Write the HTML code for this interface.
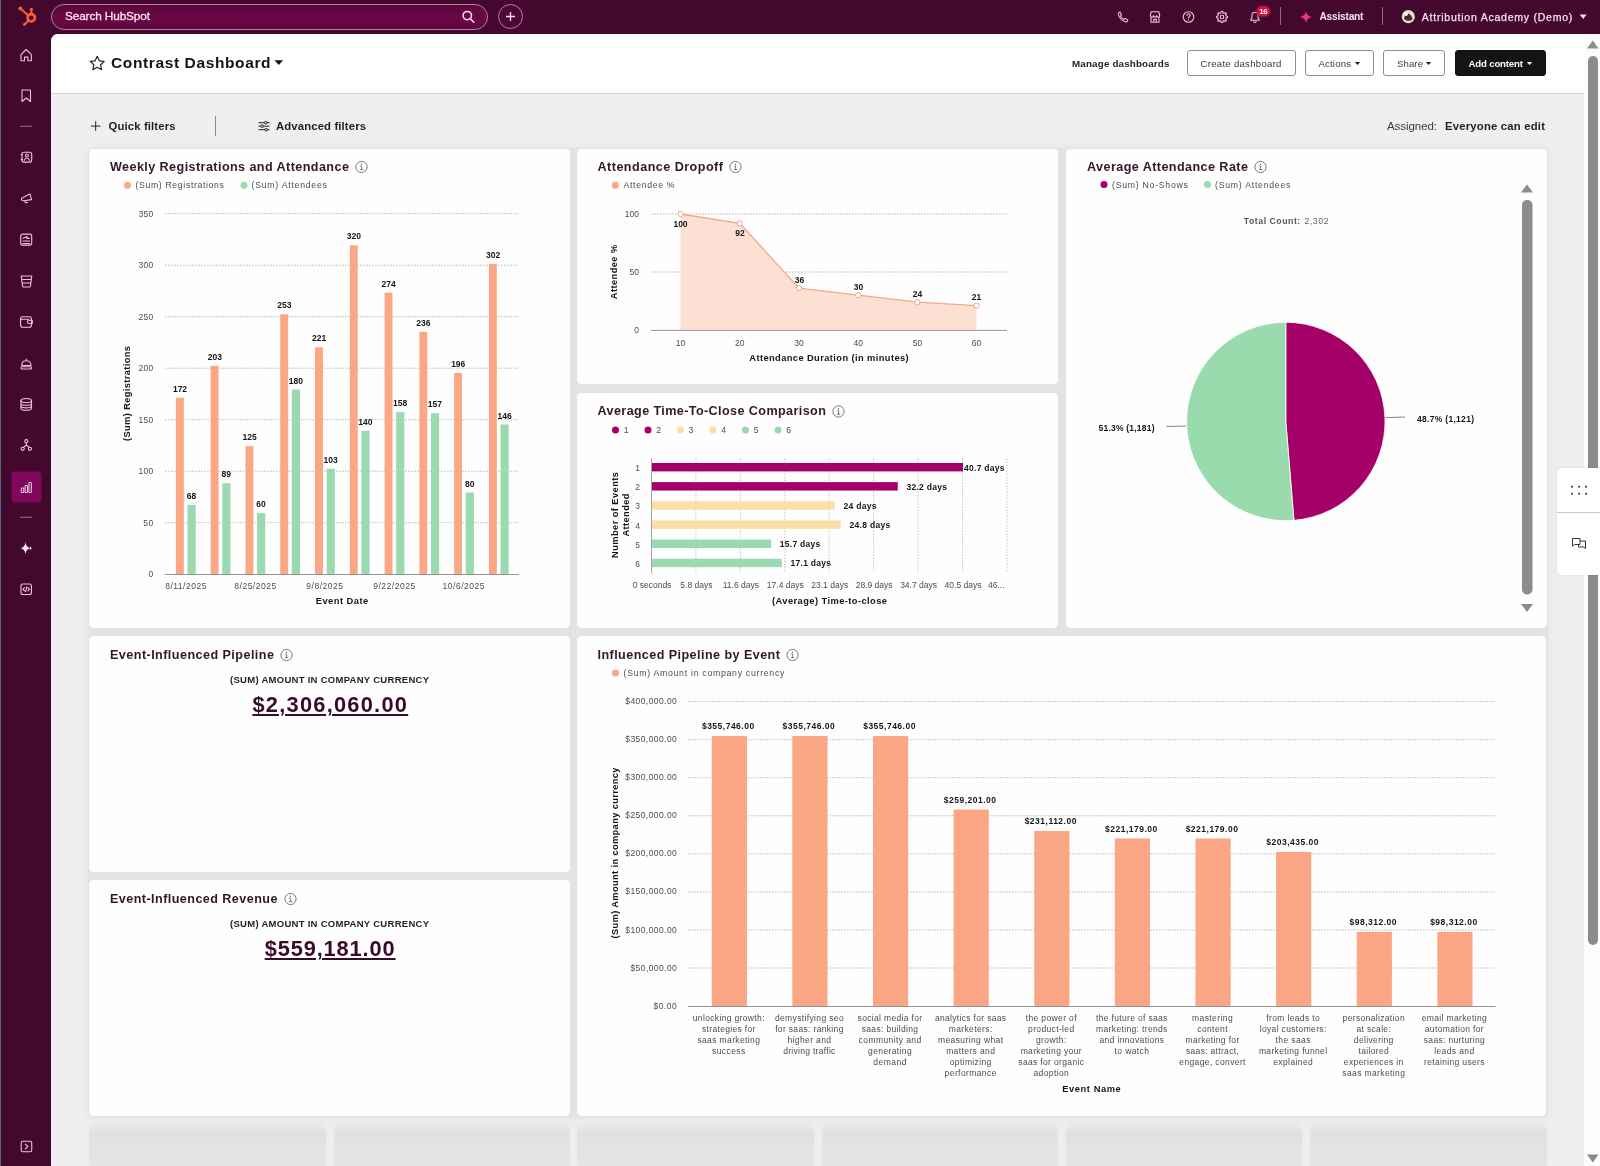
<!DOCTYPE html>
<html lang="en"><head><meta charset="utf-8"><title>Contrast Dashboard</title>
<style>
*{box-sizing:border-box;margin:0;padding:0}
html,body{width:1600px;height:1166px;overflow:hidden;background:#efefef;font-family:"Liberation Sans", Arial, sans-serif;}
body{position:relative}
#page{position:absolute;left:0;top:0;width:1600px;height:1166px;overflow:hidden;will-change:transform}
.t{position:absolute;white-space:nowrap;line-height:1;}
.abs{position:absolute}
#top{position:absolute;left:0;top:0;width:1600px;height:34px;background:#44082e}
#side{position:absolute;left:0;top:0;width:51px;height:1166px;background:#44082e}
#edge{position:absolute;left:0;top:0;width:3px;height:1166px;background:linear-gradient(90deg,#70667b 0,#6a5f75 .9px,#2e1232 1.300px,#34102f 2px,#44082e 3px)}
#main{position:absolute;left:51px;top:34px;width:1549px;height:1132px;background:#efefef;border-top-left-radius:7px;overflow:hidden}
#hdr{position:absolute;left:0;top:0;width:1549px;height:59.700px;background:#fff;border-bottom:1px solid #d4d4d4}
#search{position:absolute;left:51px;top:4px;width:437px;height:26px;border-radius:13px;border:1px solid #b97ba3;background:linear-gradient(180deg,#5a083c 0,#6a0746 55%,#5e083f 100%)}
#plus{position:absolute;left:498px;top:4px;width:25px;height:25px;border-radius:50%;border:1px solid #b97ba3;background:#4b0934}
.vdiv{position:absolute;width:1px;background:#9a6787}
.btn{position:absolute;top:50.300px;height:25.5px;border:1px solid #8e8e8e;border-radius:3px;background:#fff}
.btn.dark{background:#141414;border-color:#141414}
.card{position:absolute;background:#fefefe;border-radius:4.500px}
#backdrop{position:absolute;left:88px;top:147.500px;width:1459.500px;height:970px;border-radius:6px;background:#e3e3e3;box-shadow:0 0 8px 1px rgba(226,226,226,.75)}
.sk{position:absolute;top:1123.500px;height:60px;border-radius:5px;background:linear-gradient(180deg,#ebebeb 0,#e1e1e1 8px,#e3e3e3 24px,#e6e6e6 100%);box-shadow:0 0 5px rgba(0,0,0,.03)}
svg{position:absolute;left:0;top:0;overflow:visible}
svg text{font-family:"Liberation Sans", Arial, sans-serif;}
#sbar{position:absolute;left:1584px;top:34px;width:16px;height:1132px;background:#fcfcfc}
#float{position:absolute;left:1557px;top:468px;width:43px;height:107px;background:#fff;border-radius:5px 0 0 5px;box-shadow:0 0 3px rgba(0,0,0,.08)}
</style></head>
<body><div id="page">
<div id="top"></div><div id="side"></div><div id="edge"></div>
<div id="search"></div><div id="plus"></div>
<span class="t" style="left:65.00px;top:11.31px;font-size:11.8px;color:#fbe3f2;letter-spacing:-0.122px;-webkit-text-stroke:.3px #fbe3f2;">Search HubSpot</span>
<div class="vdiv" style="left:1280px;top:7px;height:18px"></div><div class="vdiv" style="left:1382px;top:7px;height:18px"></div>
<span class="t" style="left:1319.50px;top:11.77px;font-size:10.2px;color:#fbe3f2;font-weight:700;letter-spacing:-0.24px;">Assistant</span>
<span class="t" style="left:1421.80px;top:12.31px;font-size:10.5px;color:#fbe3f2;letter-spacing:0.768px;-webkit-text-stroke:.25px #fbe3f2;">Attribution Academy (Demo)</span>
<div class="abs" style="left:51px;top:34px;width:12px;height:12px;background:#44082e"></div><div id="main"><div id="hdr"></div></div>
<span class="t" style="left:111.00px;top:55.48px;font-size:15.5px;color:#141414;font-weight:700;letter-spacing:0.618px;">Contrast Dashboard</span>
<span class="t" style="left:1072.00px;top:58.90px;font-size:9.8px;color:#1f1f1f;font-weight:700;letter-spacing:0.171px;">Manage dashboards</span>
<div class="btn" style="left:1187px;width:108.500px"></div>
<div class="btn" style="left:1305px;width:68.500px"></div>
<div class="btn" style="left:1383px;width:62px"></div>
<div class="btn dark" style="left:1454.500px;width:91.500px"></div>
<span class="t" style="left:1200.50px;top:59.07px;font-size:9.6px;color:#3a3a3a;letter-spacing:0.276px;">Create dashboard</span>
<span class="t" style="left:1318.50px;top:59.07px;font-size:9.6px;color:#3a3a3a;letter-spacing:0.17px;">Actions</span>
<span class="t" style="left:1397.00px;top:59.07px;font-size:9.6px;color:#3a3a3a;letter-spacing:0.095px;">Share</span>
<span class="t" style="left:1468.50px;top:59.07px;font-size:9.6px;color:#fff;font-weight:700;letter-spacing:-0.149px;">Add content</span>
<span class="t" style="left:108.50px;top:120.93px;font-size:11.3px;color:#1f1f1f;font-weight:700;letter-spacing:0.141px;">Quick filters</span>
<div class="abs" style="left:215px;top:115.500px;width:1px;height:20px;background:#8f8f8f"></div>
<span class="t" style="left:276.00px;top:120.93px;font-size:11.3px;color:#1f1f1f;font-weight:700;letter-spacing:0.139px;">Advanced filters</span>
<span class="t" style="left:1387.00px;top:120.57px;font-size:11.5px;color:#3c3c3c;letter-spacing:-0.063px;">Assigned:</span>
<span class="t" style="left:1445.00px;top:120.93px;font-size:11.3px;color:#1f1f1f;font-weight:700;letter-spacing:0.205px;">Everyone can edit</span>
<div id="backdrop"></div>
<div class="card" style="left:89.2px;top:148.7px;width:480.8px;height:479.8px"></div>
<div class="card" style="left:577.2px;top:148.7px;width:480.8px;height:235.6px"></div>
<div class="card" style="left:577.2px;top:392.7px;width:480.8px;height:235.8px"></div>
<div class="card" style="left:1066px;top:148.7px;width:480.5px;height:479.8px"></div>
<div class="card" style="left:89.2px;top:636.4px;width:480.8px;height:236px"></div>
<div class="card" style="left:89.2px;top:880.4px;width:480.8px;height:236px"></div>
<div class="card" style="left:577.2px;top:636.4px;width:969.3px;height:480px"></div>
<div class="sk" style="left:89px;width:237px"></div>
<div class="sk" style="left:333.5px;width:236.5px"></div>
<div class="sk" style="left:577px;width:237px"></div>
<div class="sk" style="left:821.5px;width:236.5px"></div>
<div class="sk" style="left:1066px;width:236px"></div>
<div class="sk" style="left:1309.5px;width:237.0px"></div>
<span class="t" style="left:110.00px;top:160.73px;font-size:12.6px;color:#33172b;font-weight:700;letter-spacing:0.419px;">Weekly Registrations and Attendance</span>
<span class="t" style="left:597.50px;top:160.73px;font-size:12.6px;color:#33172b;font-weight:700;letter-spacing:0.465px;">Attendance Dropoff</span>
<span class="t" style="left:597.50px;top:405.23px;font-size:12.6px;color:#33172b;font-weight:700;letter-spacing:0.399px;">Average Time-To-Close Comparison</span>
<span class="t" style="left:1087.00px;top:160.73px;font-size:12.6px;color:#33172b;font-weight:700;letter-spacing:0.422px;">Average Attendance Rate</span>
<span class="t" style="left:110.00px;top:648.73px;font-size:12.6px;color:#33172b;font-weight:700;letter-spacing:0.444px;">Event-Influenced Pipeline</span>
<span class="t" style="left:110.00px;top:892.73px;font-size:12.6px;color:#33172b;font-weight:700;letter-spacing:0.433px;">Event-Influenced Revenue</span>
<span class="t" style="left:597.50px;top:648.73px;font-size:12.6px;color:#33172b;font-weight:700;letter-spacing:0.432px;">Influenced Pipeline by Event</span>
<span class="t" style="left:230.00px;top:675.46px;font-size:9.5px;color:#1f1f1f;font-weight:700;letter-spacing:0.279px;">(SUM) AMOUNT IN COMPANY CURRENCY</span>
<span class="t" style="left:230.00px;top:919.46px;font-size:9.5px;color:#1f1f1f;font-weight:700;letter-spacing:0.279px;">(SUM) AMOUNT IN COMPANY CURRENCY</span>
<span class="t" style="left:252.45px;top:694.35px;font-size:21.8px;color:#3a0a2a;font-weight:700;letter-spacing:1.257px;text-decoration:underline;text-decoration-thickness:1.600px;text-underline-offset:1.800px;">$2,306,060.00</span>
<span class="t" style="left:264.70px;top:938.35px;font-size:21.8px;color:#3a0a2a;font-weight:700;letter-spacing:0.877px;text-decoration:underline;text-decoration-thickness:1.600px;text-underline-offset:1.800px;">$559,181.00</span>
<div id="sbar"></div>
<div class="abs" style="left:1587.500px;top:55.500px;width:10.500px;height:889px;border-radius:5px;background:#8b8b8b"></div>
<div id="float"><div class="abs" style="left:0;top:44px;width:43px;height:1px;background:#c8c8c8"></div></div>
<svg id="art" width="1600" height="1166" viewBox="0 0 1600 1166"><g fill="none" stroke="#ff5c35" stroke-width="2" stroke-linecap="round"><circle cx="31.3" cy="17.8" r="3.7" stroke-width="2.600"/><path d="M31.4 14.1V9.6M28.4 15.5L20.6 8.7M28.6 20.7L24.9 23.9"/></g><circle cx="20.3" cy="8.4" r="1.9" fill="#ff5c35"/><circle cx="31.3" cy="9.3" r="1.5" fill="#ff5c35"/><circle cx="24.5" cy="24.4" r="1.4" fill="#ff5c35"/>
<g fill="none" stroke="#fbe3f2" stroke-width="1.5" stroke-linecap="round"><circle cx="467.3" cy="15.6" r="4.2"/><path d="M470.4 18.8L473.8 22.2"/></g>
<path d="M510.5 12v9M506 16.5h9" stroke="#fbe3f2" stroke-width="1.3" fill="none"/>
<path fill="none" stroke="#ecc3dc" stroke-width="1.1" stroke-linecap="round" stroke-linejoin="round" d="M1119.5 12.3c-.9.4-1.4 1.3-1.1 2.3 1 3.400 3.500 6 6.900 7.200 1 .3 1.900-.2 2.300-1.100l.2-.6-2.500-1.700-1.300 1c-1.500-.8-2.700-2-3.500-3.500l1-1.300-1.500-2.600z"/>
<path fill="none" stroke="#ecc3dc" stroke-width="1.1" stroke-linecap="round" stroke-linejoin="round" d="M1150.3 15.500l.9-3.800h7.600l.9 3.800c0 1-.8 1.700-1.600 1.700s-1.600-.7-1.600-1.700c0 1-.7 1.700-1.500 1.700s-1.500-.7-1.500-1.700c0 1-.8 1.700-1.600 1.700s-1.600-.7-1.600-1.700zM1151 17.200v5h8v-5M1153.700 22.200v-2.800h2.600v2.800"/>
<circle fill="none" stroke="#ecc3dc" stroke-width="1.1" stroke-linecap="round" stroke-linejoin="round" cx="1188.5" cy="17" r="5.3"/><path fill="none" stroke="#ecc3dc" stroke-width="1.1" stroke-linecap="round" stroke-linejoin="round" d="M1186.900 15.400c0-1 .7-1.600 1.600-1.600s1.600.6 1.600 1.500c0 1.200-1.600 1.300-1.600 2.700M1188.500 19.700v.2"/>
<path fill="none" stroke="#ecc3dc" stroke-width="1.1" stroke-linecap="round" stroke-linejoin="round" d="M1226.06 15.92L1227.44 16.18L1227.44 17.82L1226.06 18.08L1225.63 19.11L1226.43 20.26L1225.26 21.43L1224.11 20.63L1223.08 21.06L1222.82 22.44L1221.18 22.44L1220.92 21.06L1219.89 20.63L1218.74 21.43L1217.57 20.26L1218.37 19.11L1217.94 18.08L1216.56 17.82L1216.56 16.18L1217.94 15.92L1218.37 14.89L1217.57 13.74L1218.74 12.57L1219.89 13.37L1220.92 12.94L1221.18 11.56L1222.82 11.56L1223.08 12.94L1224.11 13.37L1225.26 12.57L1226.43 13.74L1225.63 14.89Z"/><circle fill="none" stroke="#ecc3dc" stroke-width="1.1" stroke-linecap="round" stroke-linejoin="round" cx="1222" cy="17" r="1.8"/>
<path fill="none" stroke="#ecc3dc" stroke-width="1.1" stroke-linecap="round" stroke-linejoin="round" d="M1250.600 20.200h8.800c-1-.9-1.400-1.900-1.400-3.600v-1.200c0-1.800-1.300-3.200-3-3.200s-3 1.400-3 3.200v1.200c0 1.700-.4 2.700-1.400 3.600zM1253.800 21.800c.3.500.7.700 1.200.7s.9-.2 1.200-.7"/>
<rect x="1255.600" y="5" width="15.500" height="12.600" rx="6.300" fill="#8e0b36" opacity=".5"/><rect x="1256.700" y="6" width="13.300" height="10.600" rx="5.300" fill="#d3123d"/>
<path fill="#f5357f" d="M1306 10.800c.5 3.600 1.700 4.900 5.800 6.200-4.100 1.300-5.300 2.600-5.800 6.200-.5-3.600-1.700-4.900-5.800-6.200 4.100-1.300 5.300-2.600 5.800-6.200z"/>
<circle cx="1408.300" cy="16.700" r="6.600" fill="#e7dcd6"/><path d="M1404 18.500c.5-2.500 2-4.500 4.500-5 2.200 1 3.600 3 4 5.500-1.300 2.300-6.500 2.600-8.500-.5z" fill="#4a2a22"/><circle cx="1406" cy="14" r="2" fill="#f7f3f0"/>
<path d="M1579.800 14.600h6.800l-3.400 4.300z" fill="#fbe3f2"/>
<path fill="none" stroke="#ecc3dc" stroke-width="1.1" stroke-linecap="round" stroke-linejoin="round" stroke-width="1.2" d="M21 54.700L26.200 49.500l5.200 5.200v6h-3.500v-3.600h-3.400v3.600H21z"/>
<path fill="none" stroke="#ecc3dc" stroke-width="1.1" stroke-linecap="round" stroke-linejoin="round" stroke-width="1.2" d="M22 90h8.500v11.500l-4.250-3.500-4.250 3.500z"/>
<path d="M20 126.300h12" stroke="#8d5f7d" stroke-width="1.2"/>
<rect fill="none" stroke="#ecc3dc" stroke-width="1.1" stroke-linecap="round" stroke-linejoin="round" x="21.9" y="152.29999999999998" width="9.8" height="9.8" rx="2"/><circle fill="none" stroke="#ecc3dc" stroke-width="1.1" stroke-linecap="round" stroke-linejoin="round" cx="26.900" cy="155.500" r="1.500"/><path fill="none" stroke="#ecc3dc" stroke-width="1.1" stroke-linecap="round" stroke-linejoin="round" d="M24.300 160.300c.5-1.600 1.400-2.300 2.600-2.300s2.100.7 2.600 2.300M21.200 154.800h1.400M21.200 159.600h1.400"/>
<path fill="none" stroke="#ecc3dc" stroke-width="1.1" stroke-linecap="round" stroke-linejoin="round" stroke-width="1.2" d="M21.600 198.300l8.200-4.300 1.900 5.600-7.800 1.200c-1.200.1-2.100-.4-2.400-1.200-.2-.6-.1-1 .1-1.300zM24.700 200.800l.8 2 1.900-.5"/>
<rect fill="none" stroke="#ecc3dc" stroke-width="1.1" stroke-linecap="round" stroke-linejoin="round" x="20.7" y="234.1" width="11" height="11" rx="2"/><path fill="none" stroke="#ecc3dc" stroke-width="1.1" stroke-linecap="round" stroke-linejoin="round" d="M23 243.500h6.500M23 241h6.500M23 238.200l4-1.800v2h2.500"/>
<path fill="none" stroke="#ecc3dc" stroke-width="1.1" stroke-linecap="round" stroke-linejoin="round" stroke-width="1.2" d="M21.200 276h10.600l-1.400 10.300c-.1.500-.4.700-.9.700h-6c-.5 0-.8-.2-.9-.7zM21.700 279.500h9.600M22.200 283h8.600"/>
<rect fill="none" stroke="#ecc3dc" stroke-width="1.1" stroke-linecap="round" stroke-linejoin="round" stroke-width="1.200" x="20.600" y="316.800" width="10.800" height="10.500" rx="2"/><path fill="none" stroke="#ecc3dc" stroke-width="1.1" stroke-linecap="round" stroke-linejoin="round" d="M32.300 320.300h-3.400c-.9 0-1.500.700-1.500 1.600s.6 1.600 1.500 1.600h3.400zM20.600 319.300h8"/>
<path fill="none" stroke="#ecc3dc" stroke-width="1.1" stroke-linecap="round" stroke-linejoin="round" stroke-width="1.200" d="M21.700 365.500c0-2.900 2-4.700 4.600-4.700s4.600 1.800 4.600 4.700zM26.300 360.800v-1.700"/><rect fill="none" stroke="#ecc3dc" stroke-width="1.1" stroke-linecap="round" stroke-linejoin="round" x="21" y="366.700" width="10.600" height="2.300" rx="1"/>
<ellipse fill="none" stroke="#ecc3dc" stroke-width="1.1" stroke-linecap="round" stroke-linejoin="round" cx="26.200" cy="400.600" rx="5.300" ry="2.100"/><path fill="none" stroke="#ecc3dc" stroke-width="1.1" stroke-linecap="round" stroke-linejoin="round" d="M20.900 400.600v7.600c0 1.200 2.400 2.100 5.300 2.100s5.300-.9 5.300-2.100v-7.600M20.900 403.200c0 1.200 2.400 2.100 5.300 2.100s5.300-.9 5.300-2.100M20.900 405.800c0 1.200 2.400 2.100 5.300 2.100s5.300-.9 5.300-2.100"/>
<circle fill="none" stroke="#ecc3dc" stroke-width="1.1" stroke-linecap="round" stroke-linejoin="round" cx="26.300" cy="441.200" r="1.600"/><circle fill="none" stroke="#ecc3dc" stroke-width="1.1" stroke-linecap="round" stroke-linejoin="round" cx="22.700" cy="448.800" r="1.600"/><circle fill="none" stroke="#ecc3dc" stroke-width="1.1" stroke-linecap="round" stroke-linejoin="round" cx="29.900" cy="448.800" r="1.600"/><path fill="none" stroke="#ecc3dc" stroke-width="1.1" stroke-linecap="round" stroke-linejoin="round" d="M26.300 442.800v2.200l-3 2.400M26.300 445l3 2.400"/>
<rect x="11.500" y="471.500" width="30" height="31" rx="4" fill="#80075a"/>
<rect fill="none" stroke="#ecc3dc" stroke-width="1.1" stroke-linecap="round" stroke-linejoin="round" x="21.300" y="488" width="2.400" height="4.500" rx=".6"/><rect fill="none" stroke="#ecc3dc" stroke-width="1.1" stroke-linecap="round" stroke-linejoin="round" x="25.100" y="485.500" width="2.400" height="7" rx=".6"/><rect fill="none" stroke="#ecc3dc" stroke-width="1.1" stroke-linecap="round" stroke-linejoin="round" x="28.900" y="482.500" width="2.400" height="10" rx=".6"/>
<path d="M20 517.300h12" stroke="#8d5f7d" stroke-width="1.2"/>
<path fill="#fdeaf5" d="M25.500 542c.5 3.600 1.400 4.900 4.700 6.200-3.300 1.300-4.200 2.600-4.700 6.200-.5-3.600-1.400-4.900-4.700-6.200 3.300-1.300 4.200-2.600 4.700-6.200zM30.500 546l.5 1.700 1.700.5-1.700.5-.5 1.700-.5-1.700-1.700-.5 1.700-.5z"/>
<rect fill="none" stroke="#ecc3dc" stroke-width="1.1" stroke-linecap="round" stroke-linejoin="round" x="20.95" y="584.05" width="10.5" height="10.5" rx="2"/><path fill="none" stroke="#ecc3dc" stroke-width="1.1" stroke-linecap="round" stroke-linejoin="round" stroke-width="1" d="M24.500 587.700l-1.600 1.600 1.600 1.600M27.900 587.700l1.600 1.600-1.600 1.600M26.800 587l-1.200 4.600"/>
<rect fill="none" stroke="#ecc3dc" stroke-width="1.1" stroke-linecap="round" stroke-linejoin="round" x="21.25" y="1141.25" width="10.5" height="10.5" rx="1.5"/><path fill="none" stroke="#ecc3dc" stroke-width="1.1" stroke-linecap="round" stroke-linejoin="round" stroke-width="1.300" d="M25.300 1144.200l2.500 2.300-2.500 2.300"/>
<path fill="none" stroke="#222" stroke-width="1.2" stroke-linejoin="round" d="M97.200 56.300l2.100 4.500 4.900.6-3.600 3.400.9 4.900-4.300-2.400-4.300 2.400.9-4.900-3.600-3.400 4.900-.6z"/>
<path d="M274.500 60.300h8.600l-4.300 4.600z" fill="#141414"/>
<path d="M1354.800 62h5.400l-2.700 3z" fill="#222"/>
<path d="M1425.800 62h5.400l-2.700 3z" fill="#222"/>
<path d="M1526.800 62h5.400l-2.700 3z" fill="#fff"/>
<path d="M95.700 121.300v9.600M90.900 126.100h9.600" stroke="#222" stroke-width="1" fill="none"/>
<g stroke="#222" stroke-width="1" fill="#efefef"><path d="M258.500 122.700h11M258.500 126.200h11M258.500 129.700h11"/><circle cx="265.700" cy="122.700" r="1.300"/><circle cx="262.200" cy="126.200" r="1.300"/><circle cx="266.200" cy="129.700" r="1.300"/></g>
<circle cx="361.5" cy="167" r="5.600" fill="none" stroke="#6b6b6b" stroke-width=".9"/><path d="M360.2 166.1h1.400v3.500M359.9 169.7h3.400" stroke="#6b6b6b" stroke-width=".9" fill="none"/><circle cx="361.5" cy="164.2" r=".7" fill="#6b6b6b"/>
<circle cx="735.5" cy="167" r="5.600" fill="none" stroke="#6b6b6b" stroke-width=".9"/><path d="M734.2 166.1h1.400v3.500M733.9 169.7h3.400" stroke="#6b6b6b" stroke-width=".9" fill="none"/><circle cx="735.5" cy="164.2" r=".7" fill="#6b6b6b"/>
<circle cx="838.5" cy="411.5" r="5.600" fill="none" stroke="#6b6b6b" stroke-width=".9"/><path d="M837.2 410.6h1.400v3.500M836.9 414.2h3.400" stroke="#6b6b6b" stroke-width=".9" fill="none"/><circle cx="838.5" cy="408.7" r=".7" fill="#6b6b6b"/>
<circle cx="1260.5" cy="167" r="5.600" fill="none" stroke="#6b6b6b" stroke-width=".9"/><path d="M1259.2 166.1h1.400v3.500M1258.9 169.7h3.400" stroke="#6b6b6b" stroke-width=".9" fill="none"/><circle cx="1260.5" cy="164.2" r=".7" fill="#6b6b6b"/>
<circle cx="286.5" cy="655" r="5.600" fill="none" stroke="#6b6b6b" stroke-width=".9"/><path d="M285.2 654.1h1.400v3.500M284.9 657.7h3.400" stroke="#6b6b6b" stroke-width=".9" fill="none"/><circle cx="286.5" cy="652.2" r=".7" fill="#6b6b6b"/>
<circle cx="290.5" cy="899" r="5.600" fill="none" stroke="#6b6b6b" stroke-width=".9"/><path d="M289.2 898.1h1.400v3.500M288.9 901.7h3.400" stroke="#6b6b6b" stroke-width=".9" fill="none"/><circle cx="290.5" cy="896.2" r=".7" fill="#6b6b6b"/>
<circle cx="792.5" cy="655" r="5.600" fill="none" stroke="#6b6b6b" stroke-width=".9"/><path d="M791.2 654.1h1.400v3.500M790.9 657.7h3.400" stroke="#6b6b6b" stroke-width=".9" fill="none"/><circle cx="792.5" cy="652.2" r=".7" fill="#6b6b6b"/>
<g id="chart-weekly"><circle cx="127.5" cy="185.3" r="3.5" fill="#fba684"/><text x="135.50" y="188.30" font-size="8.7" fill="#4c4c4c" letter-spacing="0.646">(Sum) Registrations</text><circle cx="244" cy="185.3" r="3.5" fill="#9bdab0"/><text x="251.50" y="188.30" font-size="8.7" fill="#4c4c4c" letter-spacing="0.764">(Sum) Attendees</text><path d="M165 522.7H519" stroke="#b4b4b4" stroke-width=".8" stroke-dasharray="1.8 1.200" fill="none"/><path d="M165 471.2H519" stroke="#b4b4b4" stroke-width=".8" stroke-dasharray="1.8 1.200" fill="none"/><path d="M165 419.7H519" stroke="#b4b4b4" stroke-width=".8" stroke-dasharray="1.8 1.200" fill="none"/><path d="M165 368.2H519" stroke="#b4b4b4" stroke-width=".8" stroke-dasharray="1.8 1.200" fill="none"/><path d="M165 316.7H519" stroke="#b4b4b4" stroke-width=".8" stroke-dasharray="1.8 1.200" fill="none"/><path d="M165 265.2H519" stroke="#b4b4b4" stroke-width=".8" stroke-dasharray="1.8 1.200" fill="none"/><path d="M165 213.7H519" stroke="#b4b4b4" stroke-width=".8" stroke-dasharray="1.8 1.200" fill="none"/><text x="148.47" y="577.30" font-size="8.5" fill="#4c4c4c">0</text><text x="143.37" y="525.80" font-size="8.5" fill="#4c4c4c" letter-spacing="0.378">50</text><text x="138.45" y="474.30" font-size="8.5" fill="#4c4c4c" letter-spacing="0.284">100</text><text x="138.45" y="422.80" font-size="8.5" fill="#4c4c4c" letter-spacing="0.284">150</text><text x="138.45" y="371.30" font-size="8.5" fill="#4c4c4c" letter-spacing="0.284">200</text><text x="138.45" y="319.80" font-size="8.5" fill="#4c4c4c" letter-spacing="0.284">250</text><text x="138.45" y="268.30" font-size="8.5" fill="#4c4c4c" letter-spacing="0.284">300</text><text x="138.45" y="216.80" font-size="8.5" fill="#4c4c4c" letter-spacing="0.284">350</text><rect x="175.90" y="397.74" width="7.9" height="176.46" fill="#fba684"/><rect x="187.50" y="504.86" width="8.2" height="69.34" fill="#9bdab0"/><text x="172.91" y="391.84" font-size="8.5" fill="#151515" font-weight="700">172</text><text x="186.77" y="498.96" font-size="8.5" fill="#151515" font-weight="700">68</text><rect x="210.68" y="365.81" width="7.9" height="208.39" fill="#fba684"/><rect x="222.28" y="483.23" width="8.2" height="90.97" fill="#9bdab0"/><text x="207.69" y="359.91" font-size="8.5" fill="#151515" font-weight="700">203</text><text x="221.55" y="477.33" font-size="8.5" fill="#151515" font-weight="700">89</text><rect x="245.46" y="446.15" width="7.9" height="128.05" fill="#fba684"/><rect x="257.06" y="513.10" width="8.2" height="61.10" fill="#9bdab0"/><text x="242.47" y="440.25" font-size="8.5" fill="#151515" font-weight="700">125</text><text x="256.33" y="507.20" font-size="8.5" fill="#151515" font-weight="700">60</text><rect x="280.24" y="314.31" width="7.9" height="259.89" fill="#fba684"/><rect x="291.84" y="389.50" width="8.2" height="184.70" fill="#9bdab0"/><text x="277.25" y="308.41" font-size="8.5" fill="#151515" font-weight="700">253</text><text x="288.75" y="383.60" font-size="8.5" fill="#151515" font-weight="700">180</text><rect x="315.02" y="347.27" width="7.9" height="226.93" fill="#fba684"/><rect x="326.62" y="468.81" width="8.2" height="105.39" fill="#9bdab0"/><text x="312.03" y="341.37" font-size="8.5" fill="#151515" font-weight="700">221</text><text x="323.53" y="462.91" font-size="8.5" fill="#151515" font-weight="700">103</text><rect x="349.80" y="245.30" width="7.9" height="328.90" fill="#fba684"/><rect x="361.40" y="430.70" width="8.2" height="143.50" fill="#9bdab0"/><text x="346.81" y="239.40" font-size="8.5" fill="#151515" font-weight="700">320</text><text x="358.31" y="424.80" font-size="8.5" fill="#151515" font-weight="700">140</text><rect x="384.58" y="292.68" width="7.9" height="281.52" fill="#fba684"/><rect x="396.18" y="412.16" width="8.2" height="162.04" fill="#9bdab0"/><text x="381.59" y="286.78" font-size="8.5" fill="#151515" font-weight="700">274</text><text x="393.09" y="406.26" font-size="8.5" fill="#151515" font-weight="700">158</text><rect x="419.36" y="331.82" width="7.9" height="242.38" fill="#fba684"/><rect x="430.96" y="413.19" width="8.2" height="161.01" fill="#9bdab0"/><text x="416.37" y="325.92" font-size="8.5" fill="#151515" font-weight="700">236</text><text x="427.87" y="407.29" font-size="8.5" fill="#151515" font-weight="700">157</text><rect x="454.14" y="373.02" width="7.9" height="201.18" fill="#fba684"/><rect x="465.74" y="492.50" width="8.2" height="81.70" fill="#9bdab0"/><text x="451.15" y="367.12" font-size="8.5" fill="#151515" font-weight="700">196</text><text x="465.01" y="486.60" font-size="8.5" fill="#151515" font-weight="700">80</text><rect x="488.92" y="263.84" width="7.9" height="310.36" fill="#fba684"/><rect x="500.52" y="424.52" width="8.2" height="149.68" fill="#9bdab0"/><text x="485.93" y="257.94" font-size="8.5" fill="#151515" font-weight="700">302</text><text x="497.43" y="418.62" font-size="8.5" fill="#151515" font-weight="700">146</text><path d="M165 574.5H519" stroke="#969696" stroke-width="1" fill="none"/><text x="165.16" y="589.20" font-size="8.5" fill="#4c4c4c" letter-spacing="0.511">8/11/2025</text><text x="234.26" y="589.20" font-size="8.5" fill="#4c4c4c" letter-spacing="0.52">8/25/2025</text><text x="306.34" y="589.20" font-size="8.5" fill="#4c4c4c" letter-spacing="0.52">9/8/2025</text><text x="373.16" y="589.20" font-size="8.5" fill="#4c4c4c" letter-spacing="0.52">9/22/2025</text><text x="442.61" y="589.20" font-size="8.5" fill="#4c4c4c" letter-spacing="0.52">10/6/2025</text><text x="315.75" y="604.20" font-size="9.3" fill="#151515" font-weight="700" letter-spacing="0.492">Event Date</text><text x="-47.50" y="3.35" font-size="9.3" fill="#151515" font-weight="700" letter-spacing="0.369" transform="translate(126.60 393.50) rotate(-90)">(Sum) Registrations</text></g>
<g id="chart-dropoff"><circle cx="615.3" cy="185.3" r="3.5" fill="#fba684"/><text x="623.50" y="188.30" font-size="8.7" fill="#4c4c4c" letter-spacing="0.669">Attendee %</text><path d="M651 272.0H1007" stroke="#b4b4b4" stroke-width=".8" stroke-dasharray="1.8 1.200" fill="none"/><path d="M651 214.0H1007" stroke="#b4b4b4" stroke-width=".8" stroke-dasharray="1.8 1.200" fill="none"/><text x="634.27" y="333.00" font-size="8.5" fill="#4c4c4c">0</text><text x="629.55" y="275.00" font-size="8.5" fill="#4c4c4c">50</text><text x="624.82" y="217.00" font-size="8.5" fill="#4c4c4c">100</text><polygon points="680.6,330.0 680.6,214.0 739.8,223.3 799.0,288.2 858.2,295.2 917.4,302.2 976.6,305.6 976.6,330.0" fill="#fde0d4"/><polyline points="680.6,214.0 739.8,223.3 799.0,288.2 858.2,295.2 917.4,302.2 976.6,305.6" fill="none" stroke="#f2a787" stroke-width="1.300"/><path d="M651 330.4H1007" stroke="#969696" stroke-width="1" fill="none"/><circle cx="680.6" cy="214.0" r="2.600" fill="#fff" stroke="#f2a787" stroke-width="1"/><circle cx="739.8" cy="223.3" r="2.600" fill="#fff" stroke="#f2a787" stroke-width="1"/><circle cx="799.0" cy="288.2" r="2.600" fill="#fff" stroke="#f2a787" stroke-width="1"/><circle cx="858.2" cy="295.2" r="2.600" fill="#fff" stroke="#f2a787" stroke-width="1"/><circle cx="917.4" cy="302.2" r="2.600" fill="#fff" stroke="#f2a787" stroke-width="1"/><circle cx="976.6" cy="305.6" r="2.600" fill="#fff" stroke="#f2a787" stroke-width="1"/><text x="673.41" y="226.50" font-size="8.5" fill="#151515" font-weight="700">100</text><text x="735.27" y="236.00" font-size="8.5" fill="#151515" font-weight="700">92</text><text x="794.77" y="282.80" font-size="8.5" fill="#151515" font-weight="700">36</text><text x="853.77" y="290.30" font-size="8.5" fill="#151515" font-weight="700">30</text><text x="912.77" y="297.20" font-size="8.5" fill="#151515" font-weight="700">24</text><text x="971.77" y="300.20" font-size="8.5" fill="#151515" font-weight="700">21</text><text x="675.87" y="345.50" font-size="8.5" fill="#4c4c4c">10</text><text x="735.07" y="345.50" font-size="8.5" fill="#4c4c4c">20</text><text x="794.27" y="345.50" font-size="8.5" fill="#4c4c4c">30</text><text x="853.47" y="345.50" font-size="8.5" fill="#4c4c4c">40</text><text x="912.67" y="345.50" font-size="8.5" fill="#4c4c4c">50</text><text x="971.87" y="345.50" font-size="8.5" fill="#4c4c4c">60</text><text x="749.25" y="360.70" font-size="9.3" fill="#151515" font-weight="700" letter-spacing="0.412">Attendance Duration (in minutes)</text><text x="-27.25" y="3.35" font-size="9.3" fill="#151515" font-weight="700" letter-spacing="0.429" transform="translate(613.50 272.00) rotate(-90)">Attendee %</text></g>
<g id="chart-ttc"><circle cx="615.5" cy="430" r="3.5" fill="#a50067"/><text x="623.80" y="433.00" font-size="8.7" fill="#4c4c4c">1</text><circle cx="648" cy="430" r="3.5" fill="#a50067"/><text x="656.30" y="433.00" font-size="8.7" fill="#4c4c4c">2</text><circle cx="680.3" cy="430" r="3.5" fill="#fbdfa7"/><text x="688.60" y="433.00" font-size="8.7" fill="#4c4c4c">3</text><circle cx="713" cy="430" r="3.5" fill="#fbdfa7"/><text x="721.30" y="433.00" font-size="8.7" fill="#4c4c4c">4</text><circle cx="745.5" cy="430" r="3.5" fill="#9bdab0"/><text x="753.80" y="433.00" font-size="8.7" fill="#4c4c4c">5</text><circle cx="778" cy="430" r="3.5" fill="#9bdab0"/><text x="786.30" y="433.00" font-size="8.7" fill="#4c4c4c">6</text><path d="M695.9 458.5V573" stroke="#b4b4b4" stroke-width=".8" stroke-dasharray="1.5 1.500" fill="none"/><path d="M740.4 458.5V573" stroke="#b4b4b4" stroke-width=".8" stroke-dasharray="1.5 1.500" fill="none"/><path d="M784.8 458.5V573" stroke="#b4b4b4" stroke-width=".8" stroke-dasharray="1.5 1.500" fill="none"/><path d="M829.2 458.5V573" stroke="#b4b4b4" stroke-width=".8" stroke-dasharray="1.5 1.500" fill="none"/><path d="M873.6 458.5V573" stroke="#b4b4b4" stroke-width=".8" stroke-dasharray="1.5 1.500" fill="none"/><path d="M918.1 458.5V573" stroke="#b4b4b4" stroke-width=".8" stroke-dasharray="1.5 1.500" fill="none"/><path d="M962.5 458.5V573" stroke="#b4b4b4" stroke-width=".8" stroke-dasharray="1.5 1.500" fill="none"/><path d="M1006.9 458.5V573" stroke="#b4b4b4" stroke-width=".8" stroke-dasharray="1.5 1.500" fill="none"/><path d="M651.5 458.500V573.500" stroke="#9a9a9a" stroke-width=".9" fill="none"/><rect x="652" y="463.00" width="310.98" height="8.400" fill="#a50067"/><text x="963.98" y="470.70" font-size="8.5" fill="#151515" font-weight="700" letter-spacing="0.287">40.7 days</text><text x="635.14" y="471.10" font-size="8.5" fill="#4c4c4c">1</text><rect x="652" y="482.15" width="245.72" height="8.400" fill="#a50067"/><text x="906.42" y="489.85" font-size="8.5" fill="#151515" font-weight="700" letter-spacing="0.287">32.2 days</text><text x="635.14" y="490.25" font-size="8.5" fill="#4c4c4c">2</text><rect x="652" y="501.30" width="182.76" height="8.400" fill="#fbdfa7"/><text x="843.46" y="509.00" font-size="8.5" fill="#151515" font-weight="700" letter-spacing="0.312">24 days</text><text x="635.14" y="509.40" font-size="8.5" fill="#4c4c4c">3</text><rect x="652" y="520.45" width="188.90" height="8.400" fill="#fbdfa7"/><text x="849.60" y="528.15" font-size="8.5" fill="#151515" font-weight="700" letter-spacing="0.287">24.8 days</text><text x="635.14" y="528.55" font-size="8.5" fill="#4c4c4c">4</text><rect x="652" y="539.60" width="119.04" height="8.400" fill="#9bdab0"/><text x="779.74" y="547.30" font-size="8.5" fill="#151515" font-weight="700" letter-spacing="0.287">15.7 days</text><text x="635.14" y="547.70" font-size="8.5" fill="#4c4c4c">5</text><rect x="652" y="558.75" width="129.79" height="8.400" fill="#9bdab0"/><text x="790.49" y="566.45" font-size="8.5" fill="#151515" font-weight="700" letter-spacing="0.287">17.1 days</text><text x="635.14" y="566.85" font-size="8.5" fill="#4c4c4c">6</text><text x="632.63" y="588.00" font-size="8.5" fill="#4c4c4c">0 seconds</text><text x="680.36" y="588.00" font-size="8.5" fill="#4c4c4c">5.8 days</text><text x="722.75" y="588.00" font-size="8.5" fill="#4c4c4c">11.6 days</text><text x="766.86" y="588.00" font-size="8.5" fill="#4c4c4c">17.4 days</text><text x="811.29" y="588.00" font-size="8.5" fill="#4c4c4c">23.1 days</text><text x="855.72" y="588.00" font-size="8.5" fill="#4c4c4c">28.9 days</text><text x="900.15" y="588.00" font-size="8.5" fill="#4c4c4c">34.7 days</text><text x="944.58" y="588.00" font-size="8.5" fill="#4c4c4c">40.5 days</text><text x="987.96" y="588.00" font-size="8.5" fill="#4c4c4c">46...</text><text x="772.00" y="604.30" font-size="9.3" fill="#151515" font-weight="700" letter-spacing="0.435">(Average) Time-to-close</text><text x="-43.00" y="3.35" font-size="9.3" fill="#151515" font-weight="700" letter-spacing="0.428" transform="translate(614.50 515.00) rotate(-90)">Number of Events</text><text x="-21.50" y="3.35" font-size="9.3" fill="#151515" font-weight="700" letter-spacing="0.386" transform="translate(626.00 515.00) rotate(-90)">Attended</text></g>
<g id="chart-pie"><circle cx="1104" cy="184.5" r="3.5" fill="#a50067"/><text x="1112.00" y="187.50" font-size="8.7" fill="#4c4c4c" letter-spacing="0.751">(Sum) No-Shows</text><circle cx="1207.5" cy="184.5" r="3.5" fill="#9bdab0"/><text x="1215.00" y="187.50" font-size="8.7" fill="#4c4c4c" letter-spacing="0.764">(Sum) Attendees</text><text x="1243.80" y="223.60" font-size="8.7" fill="#555" font-weight="700" letter-spacing="0.539">Total Count:</text><text x="1304.50" y="223.60" font-size="8.7" fill="#666" letter-spacing="0.557">2,302</text><path d="M1285.8 421.5L1285.8 322.3A99.2 99.2 0 0 1 1293.91 520.37Z" fill="#a50067" stroke="#fff" stroke-width=".8" stroke-linejoin="round"/><path d="M1285.8 421.5L1293.91 520.37A99.2 99.2 0 1 1 1285.8 322.3Z" fill="#9adbae" stroke="#fff" stroke-width=".8" stroke-linejoin="round"/><path d="M1385.500 417.600L1405 417" stroke="#777" stroke-width=".9"/><path d="M1166.500 426.500L1186 426" stroke="#777" stroke-width=".9"/><text x="1417.00" y="421.50" font-size="8.5" fill="#151515" font-weight="700" letter-spacing="0.3">48.7% (1,121)</text><text x="1098.50" y="431.00" font-size="8.5" fill="#151515" font-weight="700" letter-spacing="0.217">51.3% (1,181)</text><rect x="1522" y="200" width="10.500" height="394.500" rx="5" fill="#8c8c8c"/><path d="M1521 192.500h12l-6-8z" fill="#8c8c8c"/><path d="M1521 604h12l-6 8z" fill="#8c8c8c"/></g>
<g id="chart-pipeline"><circle cx="615.5" cy="673" r="3.5" fill="#fba684"/><text x="623.50" y="676.00" font-size="8.7" fill="#4c4c4c" letter-spacing="0.733">(Sum) Amount in company currency</text><path d="M688 968.0H1495.5" stroke="#b4b4b4" stroke-width=".8" stroke-dasharray="1.8 1.200" fill="none"/><path d="M688 929.9H1495.5" stroke="#b4b4b4" stroke-width=".8" stroke-dasharray="1.8 1.200" fill="none"/><path d="M688 891.9H1495.5" stroke="#b4b4b4" stroke-width=".8" stroke-dasharray="1.8 1.200" fill="none"/><path d="M688 853.8H1495.5" stroke="#b4b4b4" stroke-width=".8" stroke-dasharray="1.8 1.200" fill="none"/><path d="M688 815.8H1495.5" stroke="#b4b4b4" stroke-width=".8" stroke-dasharray="1.8 1.200" fill="none"/><path d="M688 777.7H1495.5" stroke="#b4b4b4" stroke-width=".8" stroke-dasharray="1.8 1.200" fill="none"/><path d="M688 739.7H1495.5" stroke="#b4b4b4" stroke-width=".8" stroke-dasharray="1.8 1.200" fill="none"/><path d="M688 701.6H1495.5" stroke="#b4b4b4" stroke-width=".8" stroke-dasharray="1.8 1.200" fill="none"/><text x="653.61" y="1008.60" font-size="8.5" fill="#4c4c4c" letter-spacing="0.479">$0.00</text><text x="630.43" y="970.55" font-size="8.5" fill="#4c4c4c" letter-spacing="0.425">$50,000.00</text><text x="625.28" y="932.50" font-size="8.5" fill="#4c4c4c" letter-spacing="0.425">$100,000.00</text><text x="625.28" y="894.45" font-size="8.5" fill="#4c4c4c" letter-spacing="0.425">$150,000.00</text><text x="625.28" y="856.40" font-size="8.5" fill="#4c4c4c" letter-spacing="0.425">$200,000.00</text><text x="625.28" y="818.35" font-size="8.5" fill="#4c4c4c" letter-spacing="0.425">$250,000.00</text><text x="625.28" y="780.30" font-size="8.5" fill="#4c4c4c" letter-spacing="0.425">$300,000.00</text><text x="625.28" y="742.25" font-size="8.5" fill="#4c4c4c" letter-spacing="0.425">$350,000.00</text><text x="625.28" y="704.20" font-size="8.5" fill="#4c4c4c" letter-spacing="0.425">$400,000.00</text><rect x="711.75" y="736.08" width="35.200" height="269.92" fill="#fba684"/><text x="701.93" y="729.18" font-size="8.5" fill="#151515" font-weight="700" letter-spacing="0.496">$355,746.00</text><text x="692.76" y="1020.60" font-size="8.5" fill="#4c4c4c" letter-spacing="0.351">unlocking growth:</text><text x="702.00" y="1031.65" font-size="8.5" fill="#4c4c4c" letter-spacing="0.321">strategies for</text><text x="697.38" y="1042.70" font-size="8.5" fill="#4c4c4c" letter-spacing="0.377">saas marketing</text><text x="711.99" y="1053.75" font-size="8.5" fill="#4c4c4c" letter-spacing="0.435">success</text><rect x="792.37" y="736.08" width="35.200" height="269.92" fill="#fba684"/><text x="782.55" y="729.18" font-size="8.5" fill="#151515" font-weight="700" letter-spacing="0.496">$355,746.00</text><text x="774.93" y="1020.60" font-size="8.5" fill="#4c4c4c" letter-spacing="0.359">demystifying seo</text><text x="775.18" y="1031.65" font-size="8.5" fill="#4c4c4c" letter-spacing="0.334">for saas: ranking</text><text x="787.48" y="1042.70" font-size="8.5" fill="#4c4c4c" letter-spacing="0.379">higher and</text><text x="783.21" y="1053.75" font-size="8.5" fill="#4c4c4c" letter-spacing="0.292">driving traffic</text><rect x="872.99" y="736.08" width="35.200" height="269.92" fill="#fba684"/><text x="863.17" y="729.18" font-size="8.5" fill="#151515" font-weight="700" letter-spacing="0.496">$355,746.00</text><text x="857.60" y="1020.60" font-size="8.5" fill="#4c4c4c" letter-spacing="0.337">social media for</text><text x="861.69" y="1031.65" font-size="8.5" fill="#4c4c4c" letter-spacing="0.34">saas: building</text><text x="858.62" y="1042.70" font-size="8.5" fill="#4c4c4c" letter-spacing="0.408">community and</text><text x="868.10" y="1053.75" font-size="8.5" fill="#4c4c4c" letter-spacing="0.379">generating</text><text x="873.23" y="1064.80" font-size="8.5" fill="#4c4c4c" letter-spacing="0.522">demand</text><rect x="953.61" y="809.55" width="35.200" height="196.45" fill="#fba684"/><text x="943.79" y="802.65" font-size="8.5" fill="#151515" font-weight="700" letter-spacing="0.496">$259,201.00</text><text x="934.88" y="1020.60" font-size="8.5" fill="#4c4c4c" letter-spacing="0.328">analytics for saas</text><text x="948.73" y="1031.65" font-size="8.5" fill="#4c4c4c" letter-spacing="0.379">marketers:</text><text x="937.96" y="1042.70" font-size="8.5" fill="#4c4c4c" letter-spacing="0.392">measuring what</text><text x="946.16" y="1053.75" font-size="8.5" fill="#4c4c4c" letter-spacing="0.382">matters and</text><text x="949.75" y="1064.80" font-size="8.5" fill="#4c4c4c" letter-spacing="0.361">optimizing</text><text x="944.62" y="1075.85" font-size="8.5" fill="#4c4c4c" letter-spacing="0.406">performance</text><rect x="1034.23" y="830.92" width="35.200" height="175.08" fill="#fba684"/><text x="1024.67" y="824.02" font-size="8.5" fill="#151515" font-weight="700" letter-spacing="0.491">$231,112.00</text><text x="1025.75" y="1020.60" font-size="8.5" fill="#4c4c4c" letter-spacing="0.361">the power of</text><text x="1028.06" y="1031.65" font-size="8.5" fill="#4c4c4c" letter-spacing="0.361">product-led</text><text x="1036.01" y="1042.70" font-size="8.5" fill="#4c4c4c" letter-spacing="0.395">growth:</text><text x="1020.63" y="1053.75" font-size="8.5" fill="#4c4c4c" letter-spacing="0.368">marketing your</text><text x="1018.32" y="1064.80" font-size="8.5" fill="#4c4c4c" letter-spacing="0.343">saas for organic</text><text x="1033.44" y="1075.85" font-size="8.5" fill="#4c4c4c" letter-spacing="0.396">adoption</text><rect x="1114.85" y="838.48" width="35.200" height="167.52" fill="#fba684"/><text x="1105.03" y="831.58" font-size="8.5" fill="#151515" font-weight="700" letter-spacing="0.496">$221,179.00</text><text x="1096.12" y="1020.60" font-size="8.5" fill="#4c4c4c" letter-spacing="0.328">the future of saas</text><text x="1096.12" y="1031.65" font-size="8.5" fill="#4c4c4c" letter-spacing="0.349">marketing: trends</text><text x="1099.45" y="1042.70" font-size="8.5" fill="#4c4c4c" letter-spacing="0.362">and innovations</text><text x="1114.58" y="1053.75" font-size="8.5" fill="#4c4c4c" letter-spacing="0.384">to watch</text><rect x="1195.47" y="838.48" width="35.200" height="167.52" fill="#fba684"/><text x="1185.65" y="831.58" font-size="8.5" fill="#151515" font-weight="700" letter-spacing="0.496">$221,179.00</text><text x="1192.12" y="1020.60" font-size="8.5" fill="#4c4c4c" letter-spacing="0.397">mastering</text><text x="1197.24" y="1031.65" font-size="8.5" fill="#4c4c4c" letter-spacing="0.395">content</text><text x="1185.46" y="1042.70" font-size="8.5" fill="#4c4c4c" letter-spacing="0.351">marketing for</text><text x="1185.97" y="1053.75" font-size="8.5" fill="#4c4c4c" letter-spacing="0.318">saas: attract,</text><text x="1179.30" y="1064.80" font-size="8.5" fill="#4c4c4c" letter-spacing="0.37">engage, convert</text><rect x="1276.09" y="851.99" width="35.200" height="154.01" fill="#fba684"/><text x="1266.27" y="845.09" font-size="8.5" fill="#151515" font-weight="700" letter-spacing="0.496">$203,435.00</text><text x="1266.34" y="1020.60" font-size="8.5" fill="#4c4c4c" letter-spacing="0.348">from leads to</text><text x="1259.67" y="1031.65" font-size="8.5" fill="#4c4c4c" letter-spacing="0.348">loyal customers:</text><text x="1275.56" y="1042.70" font-size="8.5" fill="#4c4c4c" letter-spacing="0.39">the saas</text><text x="1258.90" y="1053.75" font-size="8.5" fill="#4c4c4c" letter-spacing="0.356">marketing funnel</text><text x="1273.25" y="1064.80" font-size="8.5" fill="#4c4c4c" letter-spacing="0.387">explained</text><rect x="1356.71" y="931.98" width="35.200" height="74.02" fill="#fba684"/><text x="1349.51" y="925.08" font-size="8.5" fill="#151515" font-weight="700" letter-spacing="0.496">$98,312.00</text><text x="1342.59" y="1020.60" font-size="8.5" fill="#4c4c4c" letter-spacing="0.347">personalization</text><text x="1356.44" y="1031.65" font-size="8.5" fill="#4c4c4c" letter-spacing="0.336">at scale:</text><text x="1353.87" y="1042.70" font-size="8.5" fill="#4c4c4c" letter-spacing="0.344">delivering</text><text x="1358.49" y="1053.75" font-size="8.5" fill="#4c4c4c" letter-spacing="0.339">tailored</text><text x="1343.87" y="1064.80" font-size="8.5" fill="#4c4c4c" letter-spacing="0.358">experiences in</text><text x="1342.34" y="1075.85" font-size="8.5" fill="#4c4c4c" letter-spacing="0.377">saas marketing</text><rect x="1437.33" y="931.98" width="35.200" height="74.02" fill="#fba684"/><text x="1430.13" y="925.08" font-size="8.5" fill="#151515" font-weight="700" letter-spacing="0.496">$98,312.00</text><text x="1421.68" y="1020.60" font-size="8.5" fill="#4c4c4c" letter-spacing="0.364">email marketing</text><text x="1424.75" y="1031.65" font-size="8.5" fill="#4c4c4c" letter-spacing="0.355">automation for</text><text x="1423.73" y="1042.70" font-size="8.5" fill="#4c4c4c" letter-spacing="0.341">saas: nurturing</text><text x="1434.23" y="1053.75" font-size="8.5" fill="#4c4c4c" letter-spacing="0.392">leads and</text><text x="1423.98" y="1064.80" font-size="8.5" fill="#4c4c4c" letter-spacing="0.339">retaining users</text><path d="M688 1006.5H1495.500" stroke="#969696" stroke-width="1" fill="none"/><text x="1062.25" y="1091.70" font-size="9.3" fill="#151515" font-weight="700" letter-spacing="0.584">Event Name</text><text x="-85.50" y="3.35" font-size="9.3" fill="#151515" font-weight="700" letter-spacing="0.36" transform="translate(614.50 853.00) rotate(-90)">(Sum) Amount in company currency</text></g>
<path d="M1587 48.500h11.500l-5.750-8z" fill="#8b8b8b"/><path d="M1587 1154.500h11.500l-5.750 8z" fill="#8b8b8b"/></svg>
<svg id="art2" width="1600" height="1166" viewBox="0 0 1600 1166" style="z-index:5"><rect x="1571.2" y="485.8" width="1.800" height="1.800" fill="#333"/><rect x="1571.2" y="492.8" width="1.800" height="1.800" fill="#333"/><rect x="1578.2" y="485.8" width="1.800" height="1.800" fill="#333"/><rect x="1578.2" y="492.8" width="1.800" height="1.800" fill="#333"/><rect x="1585.2" y="485.8" width="1.800" height="1.800" fill="#333"/><rect x="1585.2" y="492.8" width="1.800" height="1.800" fill="#333"/><path fill="none" stroke="#333" stroke-width="1" stroke-linejoin="round" d="M1572.500 538.500h7.500v6h-5.500l-2 1.700zM1580 541h5.500v7.500l-2-1.500h-5v-2.500"/></svg>
<span class="t" style="left:1259.15px;top:7.60px;font-size:7.8px;color:#fff;font-weight:700;letter-spacing:-0.176px;">16</span>
</div></body></html>
